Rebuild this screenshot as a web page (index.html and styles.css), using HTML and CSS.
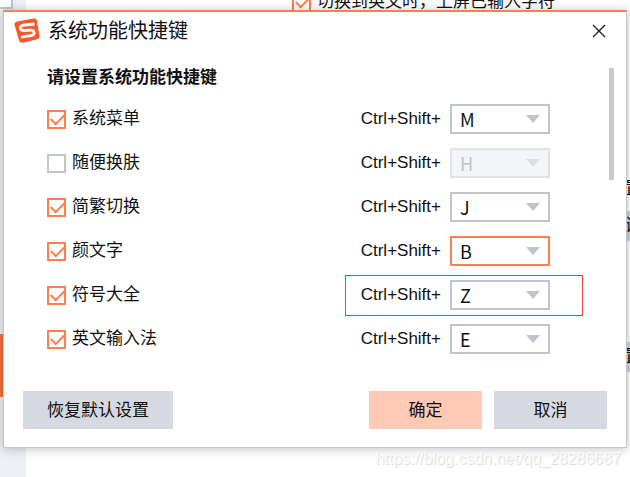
FILE: index.html
```
<!DOCTYPE html>
<html lang="zh-CN">
<head>
  <meta charset="UTF-8">
  <meta name="viewport" content="width=device-width, initial-scale=1.0">
  <title>系统功能快捷键</title>
  <link rel="stylesheet" href="styles.css">
</head>
<body>
  <!-- Ventana de propiedades detrás del diálogo -->
  <div class="backdrop">
    <div class="sidebar">
      <div class="sidebar-box"></div>
      <div class="sidebar-active"></div>
    </div>
    <div class="page">
      <label class="page-option"><input type="checkbox" class="check" checked>切换到英文时，上屏已输入字符</label>
      <span class="page-edge edge-text">置</span>
      <span class="page-edge edge-first">设</span>
      <span class="page-edge edge-last">置</span>
    </div>
  </div>

  <main class="dialog">
    <header class="dialog-header">
      <svg class="logo" viewBox="0 0 26 26" aria-hidden="true">
        <path d="M3.2 3.4 19.8.6Q22.4.2 22.9 2.8L25.4 17.8Q25.8 20.4 23.3 21.2L8.6 24.7Q6 25.2 5.2 22.7L.7 7.4Q0 4.1 3.2 3.4Z" fill="#f9582b"/>
        <path d="M20.5 6 10.5 7C4.6 7.6 5 12.6 10.2 12.5L16.3 12.2C21.4 12 21.4 16.8 16.7 17.6L7 19.2" fill="none" stroke="#fff" stroke-width="2.8"/>
      </svg>
      <h1 class="dialog-title">系统功能快捷键</h1>
      <button class="close" aria-label="关闭">
        <svg viewBox="0 0 14 14"><path d="M1 1l12 12M13 1L1 13" fill="none" stroke="#222" stroke-width="1.4"/></svg>
      </button>
    </header>

    <div class="dialog-body">
      <section class="shortcuts">
        <h2 class="section-title">请设置系统功能快捷键</h2>
        <ul class="shortcut-list">
          <li class="shortcut">
            <label class="shortcut-name"><input type="checkbox" class="check" checked>系统菜单</label>
            <div class="keys">
              <label for="keyMenu">Ctrl+Shift+</label>
              <span class="select"><select id="keyMenu"><option>M</option></select></span>
            </div>
          </li>
          <li class="shortcut">
            <label class="shortcut-name"><input type="checkbox" class="check">随便换肤</label>
            <div class="keys">
              <label for="keySkin">Ctrl+Shift+</label>
              <span class="select disabled"><select id="keySkin" disabled><option>H</option></select></span>
            </div>
          </li>
          <li class="shortcut">
            <label class="shortcut-name"><input type="checkbox" class="check" checked>简繁切换</label>
            <div class="keys">
              <label for="keyScript">Ctrl+Shift+</label>
              <span class="select"><select id="keyScript"><option>J</option></select></span>
            </div>
          </li>
          <li class="shortcut">
            <label class="shortcut-name"><input type="checkbox" class="check" checked>颜文字</label>
            <div class="keys">
              <label for="keyEmoticon">Ctrl+Shift+</label>
              <span class="select active"><select id="keyEmoticon"><option>B</option></select></span>
            </div>
          </li>
          <li class="shortcut">
            <label class="shortcut-name"><input type="checkbox" class="check" checked>符号大全</label>
            <div class="keys marked">
              <label for="keySymbols">Ctrl+Shift+</label>
              <span class="select"><select id="keySymbols"><option>Z</option></select></span>
            </div>
          </li>
          <li class="shortcut">
            <label class="shortcut-name"><input type="checkbox" class="check" checked>英文输入法</label>
            <div class="keys">
              <label for="keyEnglish">Ctrl+Shift+</label>
              <span class="select"><select id="keyEnglish"><option>E</option></select></span>
            </div>
          </li>
        </ul>
      </section>
      <div class="scroll-thumb"></div>
    </div>

    <footer class="dialog-footer">
      <button class="btn btn-reset">恢复默认设置</button>
      <button class="btn btn-primary">确定</button>
      <button class="btn">取消</button>
    </footer>
  </main>

  <div class="watermark">https://blog.csdn.net/qq_28286687</div>
</body>
</html>
```

FILE: styles.css
```
* {
  box-sizing: border-box;
}

body {
  margin: 0;
  padding: 10px 3px 0;
  position: relative;
  min-height: 100vh;
  overflow: hidden;
  font-family: "Liberation Sans", "Noto Sans CJK SC", sans-serif;
  font-size: 17px;
  line-height: 24px;
  color: #111;
  background: #fff;
}

h1,
h2,
ul {
  margin: 0;
  padding: 0;
}

button {
  font: inherit;
  color: inherit;
  border: none;
  padding: 0;
  cursor: pointer;
}

/* Fondo */
.backdrop {
  position: absolute;
  inset: 0;
  display: flex;
}

.sidebar {
  position: relative;
  width: 26px;
  background: #edf1f6;
}

.sidebar-box {
  width: 13px;
  height: 9px;
  background: #fff;
  border: solid #c0c6ce;
  border-width: 0 2px 2px 0;
}

.sidebar-active {
  position: absolute;
  top: 334px;
  left: 0;
  width: 4px;
  height: 63px;
  background: #f5713c;
}

.page {
  position: relative;
  flex: 1;
  overflow: hidden;
}

.page-option {
  position: absolute;
  top: -10px;
  left: 266px;
  display: flex;
  align-items: center;
  gap: 6px;
  white-space: nowrap;
}

.page-edge {
  position: absolute;
  right: -13px;
  width: 18px;
  height: 30px;
  line-height: 30px;
  background: #d0d4dc;
}

.edge-text {
  top: 174px;
  background: none;
}

.edge-first {
  top: 211px;
}

.edge-last {
  top: 342px;
}

/* Diálogo */
.dialog {
  position: relative;
  display: flex;
  flex-direction: column;
  background: #fff;
  border: 1px solid #c0c4cc;
  border-top: 2px solid #fa7f51;
  box-shadow: 0 1px 10px rgba(0, 0, 0, 0.25);
}

.dialog-header {
  display: flex;
  align-items: center;
  gap: 8px;
  height: 38px;
  padding: 0 20px 0 10px;
}

.logo {
  width: 26px;
  height: 26px;
}

.dialog-title {
  flex: 1;
  font-size: 20px;
  font-weight: normal;
}

.close {
  display: flex;
  background: none;
}

.close svg {
  width: 14px;
  height: 14px;
}

.dialog-body {
  display: flex;
  align-items: flex-start;
  padding: 16px 12px 0 43px;
}

.shortcuts {
  flex: 1;
}

.section-title {
  font-size: 17px;
  line-height: 24px;
}

.shortcut-list {
  list-style: none;
  padding-top: 7px;
}

.shortcut {
  display: flex;
  align-items: center;
  justify-content: space-between;
  height: 44px;
  padding-right: 59px;
}

.shortcut-name {
  display: flex;
  align-items: center;
  gap: 6px;
}

.check {
  appearance: none;
  position: relative;
  width: 19px;
  height: 19px;
  margin: 0;
  background: #fff;
  border: 2px solid #c0c5cd;
}

.check:checked {
  border-color: #ff7e50;
}

.check:checked::before {
  content: "";
  position: absolute;
  top: 3px;
  left: 2px;
  width: 11px;
  height: 6px;
  border: solid #ff7e50;
  border-width: 0 0 2px 2px;
  transform: translateY(-1px) rotate(-45deg);
}

.keys {
  position: relative;
  display: flex;
  align-items: center;
  gap: 9px;
}

/* Recuadro rojo sobre el atajo */
.keys.marked::before {
  content: "";
  position: absolute;
  inset: -5px -33px -6px -16px;
  border: 1px solid #f03c3c;
  pointer-events: none;
}

.select {
  position: relative;
  display: flex;
  width: 100px;
  height: 30px;
}

.select select {
  appearance: none;
  width: 100%;
  padding: 0 8px;
  font-family: "Noto Sans CJK SC", sans-serif;
  font-size: 18px;
  color: #111;
  background: #fff;
  border: 2px solid #c0c5cd;
  border-radius: 0;
  outline: none;
}

.select::after {
  content: "";
  position: absolute;
  top: 11px;
  right: 10px;
  border: solid transparent;
  border-width: 8px 7px 0;
  border-top-color: #c0c5cd;
  pointer-events: none;
}

.select.active select {
  border-color: #ff7e50;
}

.select.disabled select {
  color: #bfc3c8;
  opacity: 1;
  background: #f4f5f7;
  border-color: #dfe2e6;
}

.select.disabled::after {
  border-top-color: #dadde2;
}

.scroll-thumb {
  width: 5px;
  height: 112px;
  margin-top: 2px;
  background: #c5c8d1;
}

.dialog-footer {
  display: flex;
  gap: 12px;
  padding: 30px 19px 18px;
}

.btn {
  width: 113px;
  height: 38px;
  padding-top: 1px;
  background: #d6d9e1;
}

.btn:hover {
  background: #c9cdd7;
}

.btn-reset {
  width: 150px;
  margin-right: auto;
}

.btn-primary {
  background: #ffc9b5;
}

.btn-primary:hover {
  background: #ffb89e;
}

.watermark {
  position: absolute;
  right: 9px;
  bottom: 6px;
  font-size: 16px;
  color: #fafafa;
  text-shadow: 1px 1px 1px #d8d8d8;
}
```
